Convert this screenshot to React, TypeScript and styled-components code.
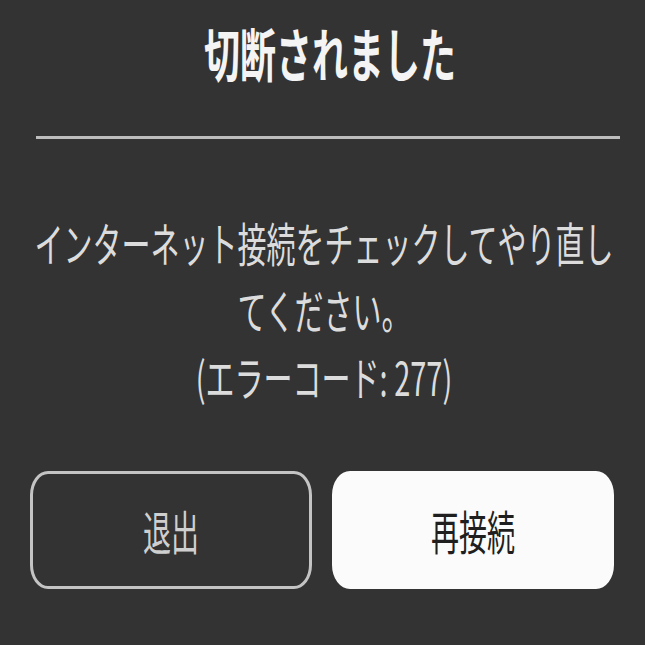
import React from 'react'
import styled, { createGlobalStyle } from 'styled-components'

const GlobalStyle = createGlobalStyle`
  html, body {
    margin: 0;
    padding: 0;
    background: #333333;
  }
  body {
    font-family: "Noto Sans CJK JP", "Noto Sans", sans-serif;
  }
`

// the screenshot is stretched vertically, so glyphs are scaled on Y
const STRETCH = 1.6

const Dialog = styled.div`
  box-sizing: border-box;
  width: 645px;
  height: 645px;
  padding: 0 31px 0 30px;
  display: flex;
  flex-direction: column;
  background: #333333;
  overflow: hidden;
`

const Title = styled.h1`
  margin: 23px 0 0;
  padding-left: 16px;
  font-size: 36px;
  line-height: 36px;
  font-weight: 700;
  color: #f4f4f4;
  text-align: center;
  white-space: nowrap;
  transform: scaleY(${STRETCH});
  transform-origin: top center;
`

const Divider = styled.hr`
  margin: 77px -6px 0 6px;
  height: 3px;
  border: none;
  background: #bdbdbd;
`

const Message = styled.div`
  margin-top: 70px;
  padding-left: 4px;
  font-size: 29px;
  line-height: 41.9px;
  color: #dcdcdc;
  text-align: center;
  white-space: nowrap;
  transform: scaleY(${STRETCH});
  transform-origin: top center;
`

const Line = styled.div``

const Actions = styled.div`
  margin-top: 136px;
  display: grid;
  grid-template-columns: 1fr 1fr;
  gap: 20px;
`

const ActionButton = styled.button<{ primary?: boolean }>`
  height: 118px;
  display: flex;
  align-items: center;
  justify-content: center;
  border-radius: 18px / 24px;
  border: 3px solid ${({ primary }) => (primary ? '#fbfbfb' : '#c4c4c4')};
  background: ${({ primary }) => (primary ? '#fbfbfb' : 'transparent')};
  color: ${({ primary }) => (primary ? '#1f1f1f' : '#cfcfcf')};
  font-family: "Noto Sans CJK JP", "Noto Sans", sans-serif;
  font-size: 28px;
  cursor: pointer;
`

const Label = styled.span`
  display: inline-block;
  transform: scaleY(1.65);
`

export default function App() {
  return (
    <>
      <GlobalStyle />
      <Dialog>
        <Title>切断されました</Title>
        <Divider />
        <Message>
          <Line>インターネット接続をチェックしてやり直し</Line>
          <Line>てください。</Line>
          <Line>(エラーコード: 277)</Line>
        </Message>
        <Actions>
          <ActionButton>
            <Label>退出</Label>
          </ActionButton>
          <ActionButton primary>
            <Label>再接続</Label>
          </ActionButton>
        </Actions>
      </Dialog>
    </>
  )
}
